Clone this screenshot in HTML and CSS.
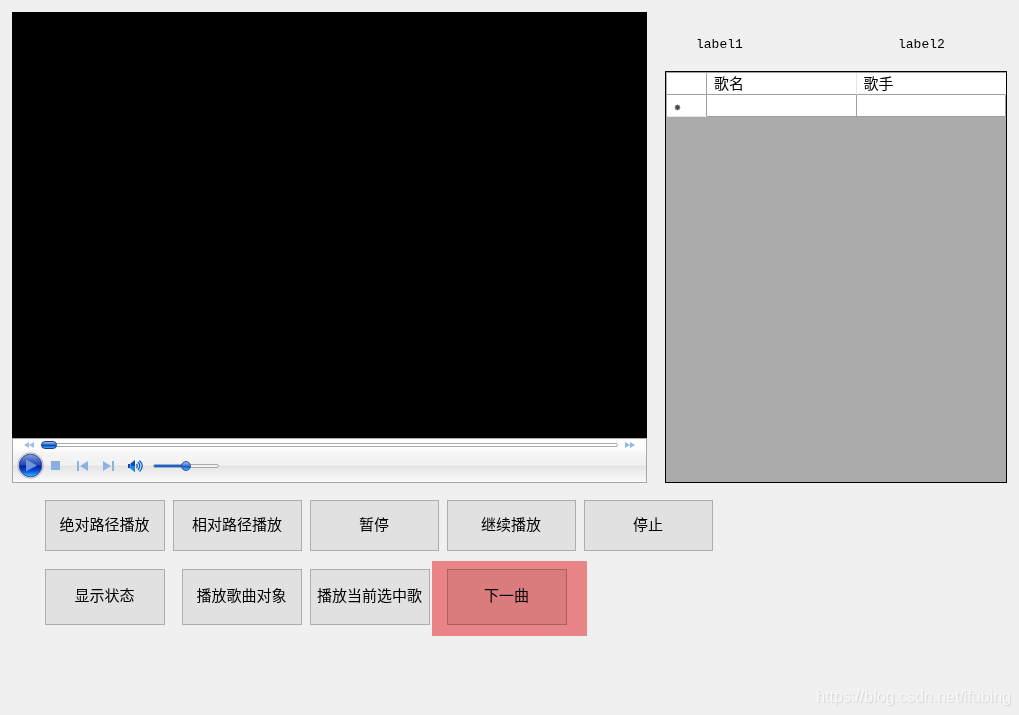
FILE: index.html
```html
<!DOCTYPE html>
<html lang="zh-CN">
<head>
<meta charset="utf-8">
<title>播放器</title>
<link rel="stylesheet" href="styles.css">
</head>
<body>
<main class="top">
  <section class="player">
    <div class="screen"></div>
    <div class="controls">
      <div class="seek-row">
        <button class="icon" type="button" aria-label="快退">
          <svg width="10" height="6" viewBox="0 0 10 6"><path d="M5 0v6L0 3zM10 0v6L5 3z" fill="#9dbfe8"/></svg>
        </button>
        <input class="seek" type="range" min="0" max="100" value="0" aria-label="进度">
        <button class="icon" type="button" aria-label="快进">
          <svg width="10" height="6" viewBox="0 0 10 6"><path d="M0 0v6l5-3zM5 0v6l5-3z" fill="#8db8ea"/></svg>
        </button>
      </div>
      <div class="button-row">
        <button class="icon play" type="button" aria-label="播放">
          <svg width="27" height="27" viewBox="0 0 27 27">
            <defs>
              <linearGradient id="ball" x1="0" y1="0" x2="0" y2="1">
                <stop offset="0" stop-color="#8fa6dc"/><stop offset=".25" stop-color="#4a6cc4"/>
                <stop offset=".48" stop-color="#2048ac"/><stop offset=".52" stop-color="#04209a"/>
                <stop offset=".75" stop-color="#0a50dc"/><stop offset="1" stop-color="#38c4ff"/>
              </linearGradient>
              <linearGradient id="arrow" x1="0" y1="0" x2="0" y2="1">
                <stop offset="0" stop-color="#7b9ad8"/><stop offset="1" stop-color="#5f90e4"/>
              </linearGradient>
            </defs>
            <circle cx="13.500" cy="13.500" r="12.800" fill="#f1f1f5" stroke="#b4b5be"/>
            <circle cx="13.500" cy="13.500" r="11.300" fill="url(#ball)" stroke="#2c489c"/>
            <path d="M9 7.500l11 6-11 6z" fill="url(#arrow)"/>
          </svg>
        </button>
        <button class="icon stop" type="button" aria-label="停止播放">
          <svg width="9" height="9" viewBox="0 0 9 9"><path d="M0 0h9v9H0z" fill="#8fabdc"/><path d="M0 5h9v4H0z" fill="#82b2ea"/></svg>
        </button>
        <button class="icon prev" type="button" aria-label="上一首">
          <svg width="11" height="10" viewBox="0 0 11 10"><path d="M0 0h2v10H0zM11 0v10L3 5z" fill="#8fb0e0"/></svg>
        </button>
        <button class="icon next" type="button" aria-label="下一首">
          <svg width="11" height="10" viewBox="0 0 11 10"><path d="M9 0h2v10H9zM0 0v10l8-5z" fill="#8fb0e0"/></svg>
        </button>
        <button class="icon sound" type="button" aria-label="静音">
          <svg width="16" height="12" viewBox="0 0 16 12">
            <path d="M0 4h2v4H0zM2.500 3.500L7 0v12L2.500 8.500z" fill="#0a48bc"/>
            <path d="M2.500 6H7v6L2.500 8.500z" fill="#1489e8"/>
            <path d="M8.500 4q1.500 2 0 4M10 2q3.500 4 0 8M11.500 .5q5.500 5.500 0 11" fill="none" stroke="#1262cc" stroke-width="1.400"/>
          </svg>
        </button>
        <input class="volume" type="range" min="0" max="100" value="50" aria-label="音量">
      </div>
    </div>
  </section>

  <section class="side">
    <div class="labels"><span>label1</span><span>label2</span></div>
    <div class="list">
      <table class="songs">
        <thead><tr><th class="mark" aria-label="行"></th><th>歌名</th><th>歌手</th></tr></thead>
        <tbody><tr>
          <td class="mark"><svg class="new-row" width="7" height="7" viewBox="0 0 7 7"><path d="M3.500 .5v6M.5 3.500h6M1.300 1.300l4.400 4.400M5.700 1.300L1.300 5.700" stroke="#999"/><circle cx="3.500" cy="3.500" r="2.400" fill="#4c4c4c"/></svg></td>
          <td></td><td></td>
        </tr></tbody>
      </table>
    </div>
  </section>
</main>

<section class="actions">
  <button class="action" type="button">绝对路径播放</button>
  <button class="action" type="button">相对路径播放</button>
  <button class="action" type="button">暂停</button>
  <button class="action" type="button">继续播放</button>
  <button class="action" type="button">停止</button>
  <button class="action small" type="button">显示状态</button>
  <button class="action small end" type="button">播放歌曲对象</button>
  <button class="action small" type="button">播放当前选中歌</button>
  <div class="marked"><button class="action small" type="button">下一曲</button></div>
</section>

<footer class="watermark">https://blog.csdn.net/ifubing</footer>
</body>
</html>
```
FILE: styles.css
```css
* { box-sizing: border-box; }

body {
  margin: 0;
  min-height: 100vh;
  display: flex;
  flex-direction: column;
  background: #f0f0f0;
  color: #000;
  font: 15px/20px "Liberation Sans", "Noto Sans CJK SC", sans-serif;
}

.top {
  display: grid;
  grid-template-columns: 635fr 342fr;
  gap: 18px;
  padding: 12px 12px 0;
}

.player { min-width: 0; }

.screen {
  aspect-ratio: 635 / 426;
  background: #000;
}

.controls {
  height: 45px;
  border: 1px solid #a8a8a8;
  background: linear-gradient(#fff 0, #fdfdfd 10px, #f5f5f5 14px, #f1f1f1 26px, #e4e4e4 27px, #fafafa 43px);
}

.icon {
  display: block;
  flex: none;
  padding: 0;
  border: 0;
  background: none;
}

.icon svg { display: block; }

.seek-row {
  display: flex;
  align-items: center;
  gap: 7px;
  height: 12px;
  padding: 0 11px;
}

.seek,
.volume {
  appearance: none;
  height: 12px;
  margin: 0;
  background: none;
}

.seek { flex: 1; min-width: 0; }

.seek::-webkit-slider-runnable-track {
  height: 4px;
  border: 1px solid #aaa;
  border-radius: 2px;
  background: #fff;
}

.seek::-webkit-slider-thumb {
  appearance: none;
  width: 16px;
  height: 8px;
  margin: -3px 0 0 -1px;
  border: 1px solid #1c3f9c;
  border-radius: 4px;
  background: linear-gradient(#a9c2ee 0, #4472d0 40%, #0636b0 50%, #2fb4fa 100%);
}

.button-row {
  display: flex;
  align-items: center;
  height: 29px;
  padding-left: 4px;
}

.stop { margin-left: 7px; }
.prev { margin-left: 17px; }
.next { margin-left: 15px; }
.sound { margin-left: 14px; }

.volume {
  width: 66px;
  margin-left: 9px;
}

.volume::-webkit-slider-runnable-track {
  height: 4px;
  border: 1px solid #aaa;
  border-radius: 2px;
  background: linear-gradient(90deg, #0d63e6 50%, #f4f4f4 50%);
}

.volume::-webkit-slider-thumb {
  appearance: none;
  width: 10px;
  height: 10px;
  margin-top: -4px;
  border: 1px solid #2b4fa8;
  border-radius: 50%;
  background: linear-gradient(#9dbbec 0, #4a78d2 45%, #1048bc 50%, #3cc0fa 100%);
}

.side {
  display: flex;
  flex-direction: column;
  min-width: 0;
}

.labels {
  display: grid;
  grid-template-columns: 202fr 109fr;
  height: 59px;
  padding: 23px 0 0 31px;
  font-family: "Liberation Mono", monospace;
  font-size: 13px;
}

.list {
  flex: 1;
  padding: 0 0 0 1px;
  border: 1px solid #000;
  background: #ababab;
}

.songs {
  width: 100%;
  table-layout: fixed;
  border-collapse: separate;
  border-spacing: 0;
  border-top: 1px solid #a0a0a0;
}

.songs th,
.songs td {
  height: 22px;
  padding: 0 0 0 7px;
  border: 0 solid #a0a0a0;
  border-width: 0 1px 1px 0;
  background: #fff;
  font-weight: 400;
  line-height: 20px;
  text-align: left;
}

.songs .mark { width: 40px; }
.songs th:nth-child(2) { border-right-color: #e5e5e5; }
.songs th:last-child { border-right-color: #fff; }
.songs td.mark { border-bottom-color: #e5e5e5; }

.new-row { display: block; margin-top: 3px; }

.actions {
  display: grid;
  grid-template-columns: 120px repeat(4, 129px);
  gap: 18px 8px;
  padding: 17px 12px 0 45px;
}

.action {
  height: 51px;
  padding: 0 1px 2px 0;
  border: 1px solid #adadad;
  background: #e1e1e1;
  color: #000;
  font: inherit;
  white-space: nowrap;
}

.small {
  width: 120px;
  height: 56px;
}

.end { justify-self: end; }

.marked {
  position: relative;
  justify-self: start;
}

.marked::after {
  content: "";
  position: absolute;
  inset: -8px -20px -11px -15px;
  background: #f88d8f;
  mix-blend-mode: multiply;
  pointer-events: none;
}

.watermark {
  margin-top: auto;
  padding: 0 8px 8px;
  color: #f8f8f8;
  font-size: 16px;
  text-align: right;
  text-shadow: 1px 1px 1px #d4d4d4;
}
```
